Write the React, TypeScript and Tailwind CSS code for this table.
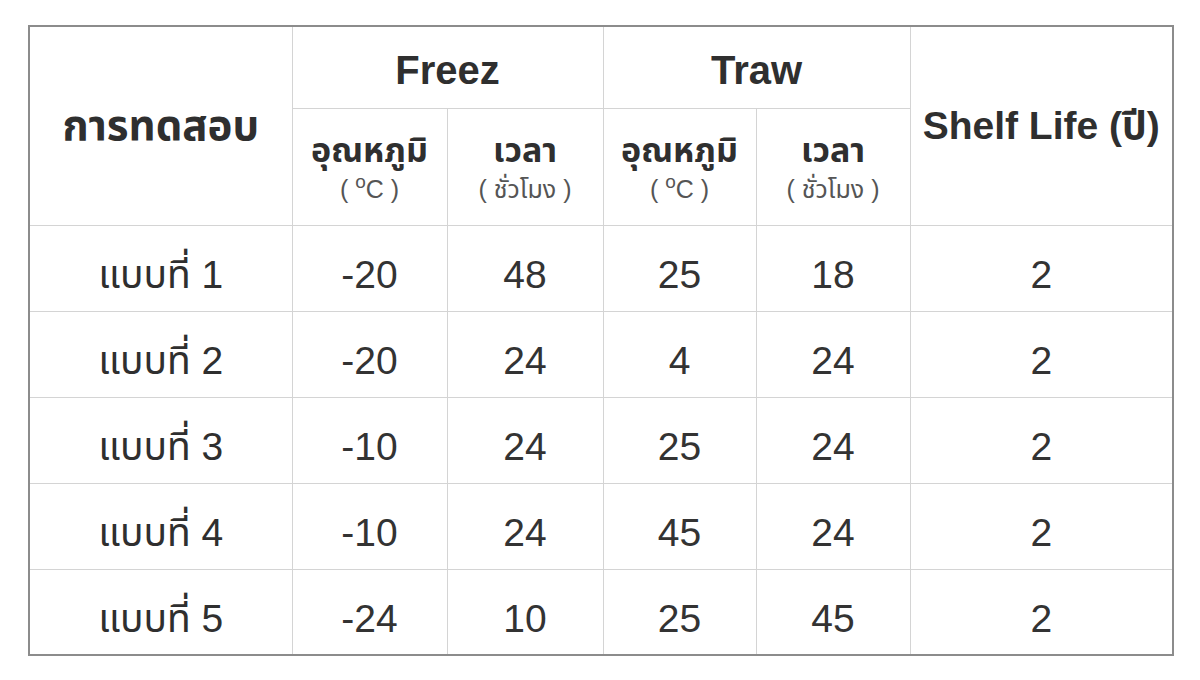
const rows = [
  { name: "แบบที่ 1", fT: "-20", fH: "48", tT: "25", tH: "18", life: "2" },
  { name: "แบบที่ 2", fT: "-20", fH: "24", tT: "4", tH: "24", life: "2" },
  { name: "แบบที่ 3", fT: "-10", fH: "24", tT: "25", tH: "24", life: "2" },
  { name: "แบบที่ 4", fT: "-10", fH: "24", tT: "45", tH: "24", life: "2" },
  { name: "แบบที่ 5", fT: "-24", fH: "10", tT: "25", tH: "45", life: "2" },
];

const cell = "border border-[#d4d4d4] text-center align-middle p-0";

const Degree = () => (
  <>
    ( <sup className="text-[19px]">o</sup>C )
  </>
);

const SubHead: React.FC<{ title: string; unit: React.ReactNode }> = (props) => (
  <th className={`${cell} pt-[2px]`}>
    <div className="text-[34px] font-bold leading-[42px] text-[#2f2f2f]">{props.title}</div>
    <div className="text-[25px] font-normal leading-[36px] text-[#555]">{props.unit}</div>
  </th>
);

const App = () => {
  return (
    <div
      className="h-[680px] w-[1200px] bg-white pl-[28px] pt-[25px] text-[#333]"
      style={{
        fontFamily:
          '"Liberation Sans", "Noto Sans Thai", "Noto Sans Thai UI", "Noto Sans", sans-serif',
      }}
    >
      <table className="w-[1144px] table-fixed border-collapse border-2 border-[#8c8c8c]">
        <colgroup>
          <col className="w-[263px]" />
          <col className="w-[155px]" />
          <col className="w-[156px]" />
          <col className="w-[153px]" />
          <col className="w-[154px]" />
          <col className="w-[263px]" />
        </colgroup>
        <thead>
          <tr className="h-[82px]">
            <th rowSpan={2} className={`${cell} text-[42px] font-bold text-[#2f2f2f]`}>
              การทดสอบ
            </th>
            <th colSpan={2} className={`${cell} pt-[6px] text-[40px] font-bold text-[#2f2f2f]`}>
              Freez
            </th>
            <th colSpan={2} className={`${cell} pt-[6px] text-[40px] font-bold text-[#2f2f2f]`}>
              Traw
            </th>
            <th rowSpan={2} className={`${cell} text-[39px] font-bold text-[#2f2f2f]`}>
              Shelf Life (ปี)
            </th>
          </tr>
          <tr className="h-[117px]">
            <SubHead title="อุณหภูมิ" unit={<Degree />} />
            <SubHead title="เวลา" unit="( ชั่วโมง )" />
            <SubHead title="อุณหภูมิ" unit={<Degree />} />
            <SubHead title="เวลา" unit="( ชั่วโมง )" />
          </tr>
        </thead>
        <tbody>
          {rows.map((r) => (
            <tr key={r.name} className="h-[86px] text-[39px]">
              <td className={`${cell} pt-[14px] text-[#2f2f2f]`}>{r.name}</td>
              <td className={`${cell} pt-[14px]`}>{r.fT}</td>
              <td className={`${cell} pt-[14px]`}>{r.fH}</td>
              <td className={`${cell} pt-[14px]`}>{r.tT}</td>
              <td className={`${cell} pt-[14px]`}>{r.tH}</td>
              <td className={`${cell} pt-[14px]`}>{r.life}</td>
            </tr>
          ))}
        </tbody>
      </table>
    </div>
  );
};

export default App;
